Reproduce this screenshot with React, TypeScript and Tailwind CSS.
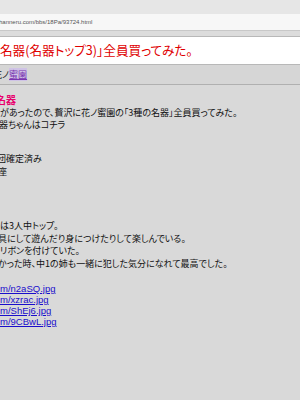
import React from 'react';

const jp = { fontFamily: '"Noto Sans CJK JP", "Noto Sans", sans-serif' };

export default function App() {
  return (
    <div className="w-[300px] h-[400px] overflow-hidden bg-[#d9d9d9] [font-feature-settings:'palt']" style={jp}>
      {/* browser chrome */}
      <div className="h-[14px] bg-[#e6e6e6]" />
      <div className="h-[17px] bg-[#f7f7f7] flex items-center border-b border-[#c8c8c8]">
        <span className="text-[6px] text-[#555] -ml-[1px] leading-none" style={{ fontFamily: '"Liberation Sans", sans-serif' }}>
          hanneru.com/bbs/18Pa/93724.html
        </span>
      </div>
      <div className="h-[5px] bg-[#dcdcdc]" />

      {/* title */}
      <div className="h-[29px] bg-white border-y border-[#b8b8b8] flex items-center overflow-hidden">
        <h1 className="whitespace-nowrap text-[12.6px] text-[#e00000] leading-none">
          名器(名器トップ3)」全員買ってみた。
        </h1>
      </div>

      {/* category */}
      <div className="h-[20px] bg-[#d6d6d6] border-b border-[#b0b0b0] flex items-center overflow-hidden">
        <span className="whitespace-nowrap text-[9px] leading-none -ml-[7px]">
          <span className="text-[#222]">花ノ</span>
          <a className="text-[#7a34b0] underline bg-[#cfc3e6]">蜜園</a>
        </span>
      </div>

      {/* body */}
      <div className="pt-[9px] text-[9px] leading-[12.5px] text-[#111] whitespace-nowrap overflow-hidden">
        <div className="-ml-[4px] text-[10px] text-[#e8006c] font-bold">名器</div>
        <div>があったので、贅沢に花ノ蜜園の「3種の名器」全員買ってみた。</div>
        <div className="-ml-[1px]">器ちゃんはコチラ</div>
        <div className="h-[21.5px]" />
        <div className="-ml-[3px]">団確定済み</div>
        <div className="-ml-[2px]">座</div>
        <div className="h-[42px]" />
        <div>は3人中トップ。</div>
        <div className="-ml-[2px]">具にして遊んだり身につけたりして楽しんでいる。</div>
        <div>リボンを付けていた。</div>
        <div className="-ml-[2px]">かった時、中1の姉も一緒に犯した気分になれて最高でした。</div>
        <div className="h-[13px]" />
        <div className="text-[9.5px] leading-[11px]" style={{ fontFamily: '"Liberation Sans", sans-serif' }}>
          <a className="block text-[#1a0dcc] underline">m/n2aSQ.jpg</a>
          <a className="block text-[#1a0dcc] underline">m/xzrac.jpg</a>
          <a className="block text-[#1a0dcc] underline">m/ShEj6.jpg</a>
          <a className="block text-[#1a0dcc] underline">m/9CBwL.jpg</a>
        </div>
      </div>
    </div>
  );
}
